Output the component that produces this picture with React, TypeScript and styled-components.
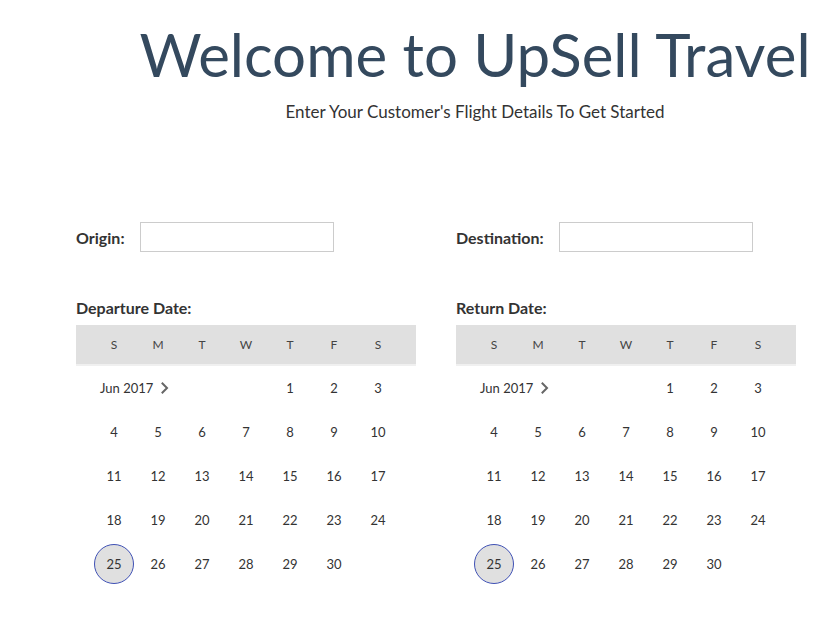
import React from "react";
import styled, { createGlobalStyle } from "styled-components";

const GlobalStyle = createGlobalStyle`
  body {
    margin: 8px;
    background: #ffffff;
    font-family: "Lato", "Open Sans", sans-serif;
    color: #333333;
  }
`;

const Page = styled.div`
  width: 100%;
`;

const Header = styled.header`
  text-align: center;
  padding-left: 115px;
`;

const Title = styled.h1`
  margin: 10px 0 0;
  font-size: 60px;
  font-weight: 400;
  line-height: 72px;
  color: #34495e;
  white-space: nowrap;
`;

const Subtitle = styled.p`
  margin: 11px 0 0;
  font-size: 17px;
  line-height: 22px;
  color: #333333;
`;

const Form = styled.div`
  margin-top: 99px;
  padding-left: 68px;
  display: grid;
  grid-template-columns: 380px 371px;
`;

const Field = styled.div`
  display: flex;
  align-items: center;
  gap: 15px;
  height: 30px;
`;

const Label = styled.label`
  font-size: 16px;
  font-weight: 700;
  color: #333333;
`;

const TextInput = styled.input`
  width: 194px;
  height: 30px;
  box-sizing: border-box;
  border: 1px solid #cccccc;
  padding: 0 6px;
  font: inherit;
`;

const DateBlock = styled.div`
  margin-top: 46px;
  display: flex;
  flex-direction: column;
`;

const DateLabel = styled(Label)`
  line-height: 20px;
  margin-bottom: 7px;
`;

const Calendar = styled.div`
  width: 340px;
`;

const WeekHeader = styled.div`
  display: grid;
  grid-template-columns: repeat(7, 44px);
  padding: 0 16px;
  height: 39px;
  align-items: center;
  background: #e0e0e0;
  border-bottom: 2px solid #f0f0f0;
`;

const WeekDay = styled.span`
  text-align: center;
  font-size: 12px;
  color: #444444;
`;

const Grid = styled.div`
  display: grid;
  grid-template-columns: repeat(7, 44px);
  grid-auto-rows: 44px;
  padding: 0 16px;
`;

const MonthCell = styled.div`
  grid-column: 1 / span 4;
  display: flex;
  align-items: center;
  gap: 8px;
  padding-left: 8px;
  font-size: 13px;
  color: #333333;
`;

const Day = styled.div<{ $col?: number; $selected?: boolean }>`
  grid-column: ${(p) => (p.$col ? p.$col : "auto")};
  display: flex;
  align-items: center;
  justify-content: center;
  font-size: 13px;
  color: #333333;
  position: relative;
  z-index: 0;
  &::before {
    content: "";
    display: ${(p) => (p.$selected ? "block" : "none")};
    position: absolute;
    z-index: -1;
    width: 38px;
    height: 38px;
    border-radius: 50%;
    background: #e0e0e0;
    border: 1px solid #3f51b5;
    left: 2px;
    top: 2px;
  }
`;

const Chevron = () => (
  <svg width="8" height="12" viewBox="0 0 8 12" fill="none">
    <path d="M1.5 1.5 L6 6 L1.5 10.5" stroke="#666" strokeWidth="2" strokeLinecap="square" />
  </svg>
);

const weekDays = ["S", "M", "T", "W", "T", "F", "S"];
const days = Array.from({ length: 30 }, (_, i) => i + 1);

const CalendarView: React.FC = () => (
  <Calendar>
    <WeekHeader>
      {weekDays.map((d, i) => (
        <WeekDay key={i}>{d}</WeekDay>
      ))}
    </WeekHeader>
    <Grid>
      <MonthCell>
        Jun 2017 <Chevron />
      </MonthCell>
      {days.map((d) => (
        <Day key={d} $col={d === 1 ? 5 : undefined} $selected={d === 25}>
          {d}
        </Day>
      ))}
    </Grid>
  </Calendar>
);

const Column: React.FC<{ field: string; dateLabel: string }> = ({ field, dateLabel }) => (
  <div>
    <Field>
      <Label>{field}:</Label>
      <TextInput type="text" />
    </Field>
    <DateBlock>
      <DateLabel>{dateLabel}:</DateLabel>
      <CalendarView />
    </DateBlock>
  </div>
);

export default function App() {
  return (
    <Page>
      <GlobalStyle />
      <Header>
        <Title>Welcome to UpSell Travel</Title>
        <Subtitle>Enter Your Customer's Flight Details To Get Started</Subtitle>
      </Header>
      <Form>
        <Column field="Origin" dateLabel="Departure Date" />
        <Column field="Destination" dateLabel="Return Date" />
      </Form>
    </Page>
  );
}
